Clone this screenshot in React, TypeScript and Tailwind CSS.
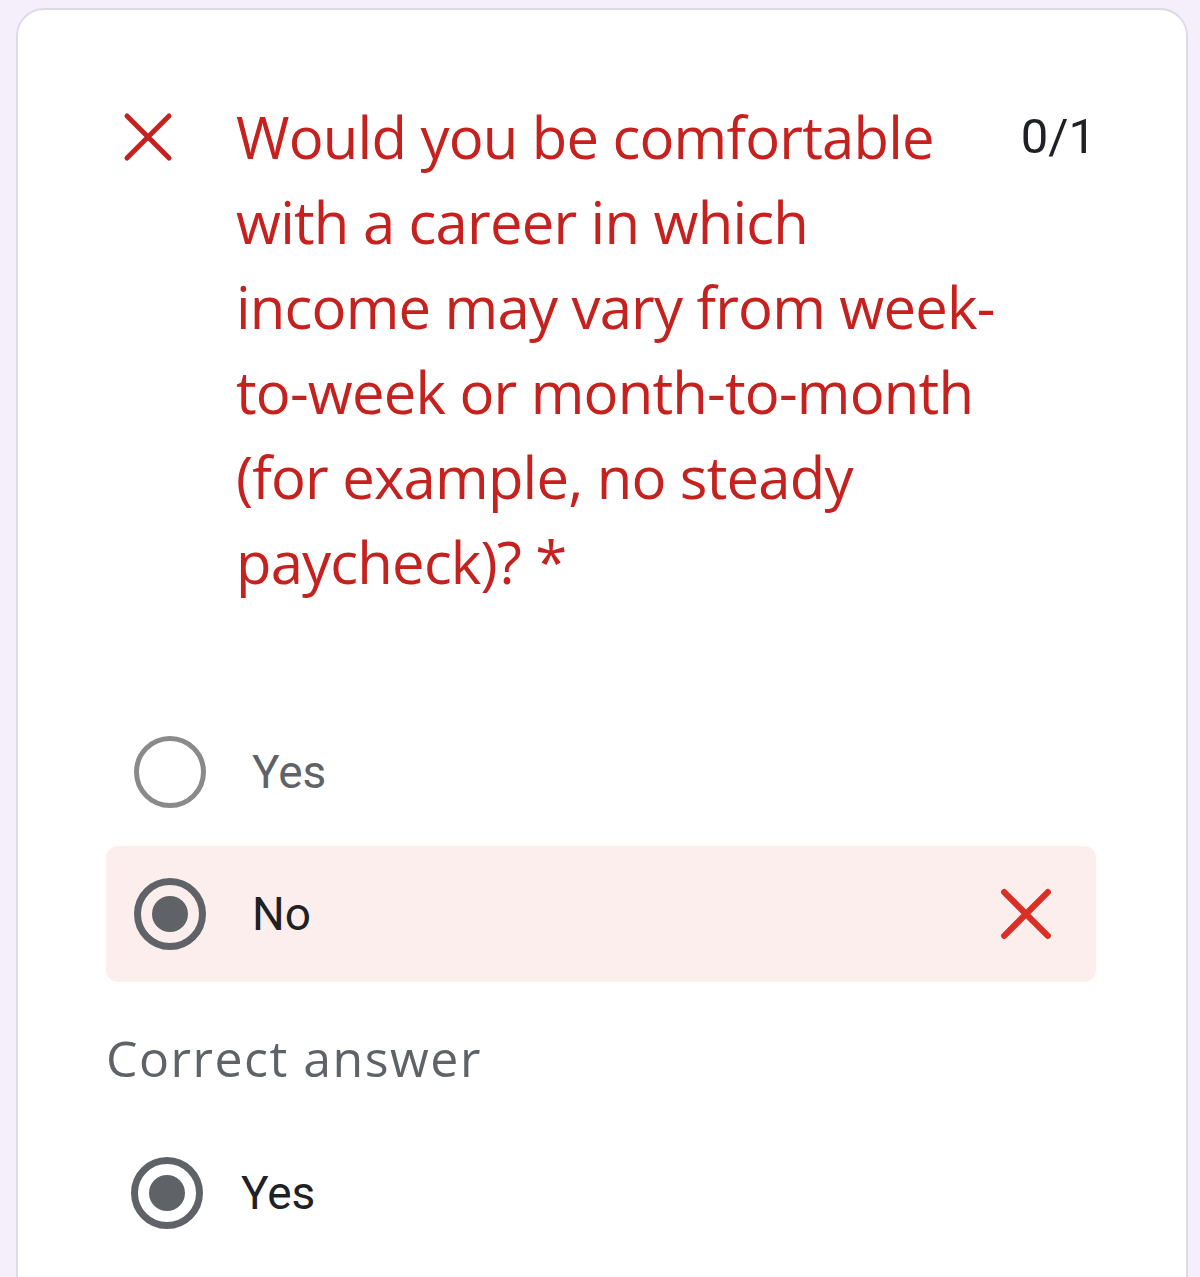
import React from "react";

const CrossIcon = ({ className, stroke = 5 }: { className?: string; stroke?: number }) => (
  <svg viewBox="0 0 50 50" className={className} fill="none" stroke="currentColor" strokeWidth={stroke} strokeLinecap="round">
    <path d="M4 4 L46 46 M46 4 L4 46" />
  </svg>
);

const Radio = ({ checked }: { checked?: boolean }) =>
  checked ? (
    <div className="w-[72px] h-[72px] rounded-full border-[7px] border-[#5f6368] flex items-center justify-center shrink-0">
      <div className="w-[36px] h-[36px] rounded-full bg-[#5f6368]" />
    </div>
  ) : (
    <div className="w-[72px] h-[72px] rounded-full border-[5px] border-[#8a8a8a] shrink-0" />
  );

export default function App() {
  return (
    <div className="h-[1277px] overflow-hidden bg-[#f4effa] pt-[8px] pl-[16px] pr-[12px]" style={{ fontFamily: "'Open Sans', 'Liberation Sans', sans-serif" }}>
      <div className="h-[1400px] bg-white border-2 border-[#dedae6] rounded-[28px] pl-[88px] pr-[90px] pt-[84px]">
        {/* Question header */}
        <div className="flex items-start">
          <div className="w-[130px] h-[85px] flex items-center pl-[17px] shrink-0">
            <CrossIcon className="w-[50px] h-[50px] text-[#c5221f]" stroke={5} />
          </div>
          <p className="flex-1 text-[58px] leading-[85px] text-[#c5221f] tracking-[-0.8px]">
            Would you be comfortable<br />
            with a career in which<br />
            income may vary from week-<br />
            to-week or month-to-month<br />
            (for example, no steady<br />
            paycheck)? *
          </p>
          <div className="h-[85px] flex items-center text-[49px] text-[#202124]" style={{ fontFamily: "Roboto, sans-serif" }}>
            0/1
          </div>
        </div>

        {/* Options */}
        <div className="mt-[100px] flex flex-col gap-[6px]" style={{ fontFamily: "Roboto, sans-serif" }}>
          <div className="h-[136px] flex items-center pl-[28px] gap-[46px] rounded-[12px]">
            <Radio />
            <span className="text-[46px] text-[#5f6368]">Yes</span>
          </div>
          <div className="h-[136px] flex items-center pl-[28px] pr-[44px] gap-[46px] rounded-[12px] bg-[#fdeeee]">
            <Radio checked />
            <span className="flex-1 text-[46px] text-[#202124]">No</span>
            <CrossIcon className="w-[52px] h-[52px] text-[#d93025]" stroke={6} />
          </div>
        </div>

        {/* Correct answer */}
        <div className="mt-[46px] text-[50px] leading-[60px] text-[#5f6368] tracking-[1.5px]">Correct answer</div>
        <div className="mt-[37px] h-[136px] flex items-center pl-[25px] gap-[38px]" style={{ fontFamily: "Roboto, sans-serif" }}>
          <Radio checked />
          <span className="text-[46px] text-[#202124]">Yes</span>
        </div>
      </div>
    </div>
  );
}
